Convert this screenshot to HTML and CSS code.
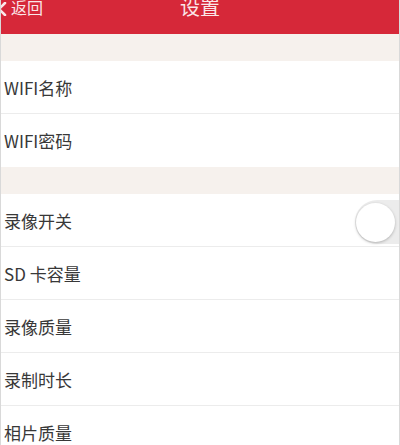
FILE: index.html
```html
<!DOCTYPE html>
<html lang="zh-CN">
<head>
    <meta charset="UTF-8">
    <meta name="viewport" content="width=device-width, initial-scale=1.0">
    <title>设置</title>
    <link rel="stylesheet" href="styles.css">
</head>
<body>
    <div class="page">
        <!-- 顶部导航 -->
        <div class="navbar">
            <div class="back">
                <svg class="back-icon" width="10" height="14" viewBox="0 0 10 14">
                    <path d="M8 1 L2 7 L8 13" fill="none" stroke="#fbe6e8" stroke-width="2.6" stroke-linecap="round" stroke-linejoin="round"/>
                </svg>
                <span>返回</span>
            </div>
            <div class="title">设置</div>
        </div>

        <div class="gap"></div>
        <div class="row"><span>WIFI名称</span></div>
        <div class="row last"><span>WIFI密码</span></div>

        <div class="gap"></div>
        <div class="row">
            <span>录像开关</span>
            <div class="switch"><div class="knob"></div></div>
        </div>
        <div class="row"><span>SD 卡容量</span></div>
        <div class="row"><span>录像质量</span></div>
        <div class="row"><span>录制时长</span></div>
        <div class="row"><span>相片质量</span></div>
    </div>
</body>
</html>
```

FILE: styles.css
```css
html, body {
    margin: 0;
    padding: 0;
    background: #fff;
    overflow: hidden;
}
body {
    font-family: "Noto Sans CJK SC", "Noto Sans", sans-serif;
    color: #383838;
}
.page {
    width: 398px;
    height: 445px;
    border-left: 1px solid #d9d9d9;
    border-right: 1px solid #d9d9d9;
    overflow: hidden;
}
.navbar {
    position: relative;
    height: 34px;
    background-color: #d62839;
    color: #fbe6e8;
    display: flex;
    justify-content: center;
    align-items: flex-start;
}
.back {
    position: absolute;
    left: -4px;
    top: -2px;
    display: flex;
    align-items: center;
    gap: 4px;
    font-size: 16px;
    line-height: 18px;
}
.back-icon {
    margin-top: 4px;
}
.title {
    font-size: 20px;
    line-height: 20px;
    margin-top: -3px;
}
.gap {
    height: 27px;
    background-color: #f6f1ed;
}
.row {
    height: 52px;
    border-bottom: 1px solid #ececec;
    display: flex;
    align-items: center;
    justify-content: space-between;
    padding-left: 3px;
    font-size: 17px;
}
.row.last {
    border-bottom: none;
    height: 53px;
}
.switch {
    width: 64px;
    height: 44px;
    margin-right: -20px;
    margin-top: 4px;
    border-radius: 22px;
    background: #ececec;
    display: flex;
    align-items: center;
    padding-left: 1px;
    box-sizing: border-box;
}
.knob {
    width: 39px;
    height: 39px;
    border-radius: 50%;
    background: #fff;
    box-shadow: 0 1px 3px rgba(0, 0, 0, 0.25);
}
```
